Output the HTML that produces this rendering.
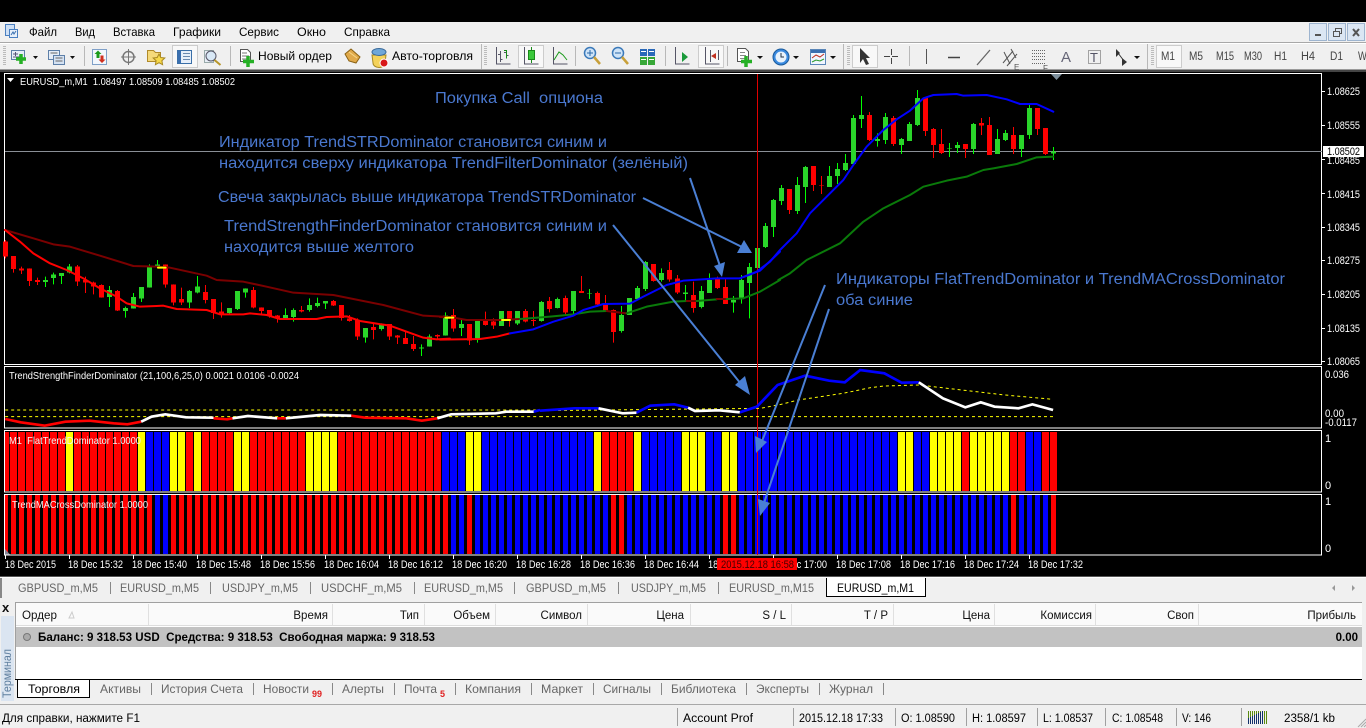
<!DOCTYPE html>
<html lang="ru"><head><meta charset="utf-8"><title>MetaTrader</title>
<style>
html,body{margin:0;padding:0;background:#000;overflow:hidden}
svg{display:block}
text{font-family:"Liberation Sans",sans-serif;white-space:pre}
.m{font-size:12px;fill:#000}
.a{font-size:11px;fill:#fff}
.t{font-size:10.5px;fill:#fff}
.n{font-size:15.5px;fill:#4a78cf}
.k{font-size:12px;fill:#666}
.h{font-size:11.5px;fill:#111}
.s{font-size:11.5px;fill:#000}
.e{text-anchor:end}
</style></head><body>
<svg xmlns="http://www.w3.org/2000/svg" width="1366" height="728" viewBox="0 0 1366 728">
<rect width="1366" height="728" fill="#000"/>

<!-- menu -->
<rect y="22" width="1366" height="20" fill="#f0f0f0"/>
<rect x="5.500" y="24.500" width="9" height="11" fill="#cfe0f5" stroke="#4a7fc0"/>
<rect x="9.500" y="29.500" width="8" height="8" fill="#e8f0fa" stroke="#4a7fc0"/>
<path d="M11 35l2-3 1 2 2-3" stroke="#3a70b0" fill="none"/>
<text class="m" x="29" y="36" textLength="28" lengthAdjust="spacingAndGlyphs">Файл</text>
<text class="m" x="75" y="36" textLength="20" lengthAdjust="spacingAndGlyphs">Вид</text>
<text class="m" x="113" y="36" textLength="42" lengthAdjust="spacingAndGlyphs">Вставка</text>
<text class="m" x="173" y="36" textLength="48" lengthAdjust="spacingAndGlyphs">Графики</text>
<text class="m" x="239" y="36" textLength="40" lengthAdjust="spacingAndGlyphs">Сервис</text>
<text class="m" x="297" y="36" textLength="29" lengthAdjust="spacingAndGlyphs">Окно</text>
<text class="m" x="344" y="36" textLength="46" lengthAdjust="spacingAndGlyphs">Справка</text>
<g fill="#dbe6f3" stroke="#9db4cf"><rect x="1309.500" y="23.500" width="17" height="17"/><rect x="1328.500" y="23.500" width="17" height="17"/><rect x="1347.500" y="23.500" width="17" height="17"/></g>
<rect x="1315" y="34" width="6" height="2" fill="#555"/>
<path d="M1333.500 31.500h6v5h-6zM1335.500 31v-2.500h6v5h-2" fill="none" stroke="#555"/>
<path d="M1353 29l6 7M1359 29l-6 7" stroke="#555" stroke-width="2"/>

<!-- toolbar -->
<rect y="42" width="1366" height="28" fill="#f0f0f0"/>
<rect y="42" width="1366" height="1" fill="#a8a8a8"/>
<rect y="43" width="1366" height="1" fill="#fff"/>
<rect y="69" width="1366" height="1" fill="#9a9a9a"/>
<rect y="70" width="1366" height="2" fill="#444"/>
<g fill="none" stroke="#bbb" stroke-dasharray="1 1"><path d="M4.500 46v20M485.500 46v20M848.500 46v20M1152.500 46v20" stroke-width="3"/></g>
<g fill="#b8b8b8"><rect x="84" y="46" width="1" height="20"/><rect x="230" y="46" width="1" height="20"/><rect x="481" y="44" width="1" height="25"/><rect x="575" y="46" width="1" height="20"/><rect x="665" y="46" width="1" height="20"/><rect x="727" y="46" width="1" height="20"/><rect x="843" y="44" width="1" height="25"/><rect x="909" y="46" width="1" height="20"/><rect x="1147" y="44" width="1" height="25"/></g>
<g fill="#f8f8f8" stroke="#ccc"><rect x="172.500" y="45.500" width="25" height="22"/><rect x="518.500" y="45.500" width="25" height="22"/><rect x="698.500" y="45.500" width="25" height="22"/><rect x="852.500" y="45.500" width="25" height="22"/><rect x="1156.500" y="45.500" width="25" height="22"/></g>
<!-- new chart -->
<rect x="11.500" y="50.500" width="13" height="9" fill="#e6eef8" stroke="#5d7fa8"/><path d="M13 54h5M15.500 52v4M13 57h8" stroke="#557"/>
<path d="M21 54v10M16 59h10" stroke="#25b025" stroke-width="3.500"/>
<path d="M33 56h5l-2.500 3z" fill="#111"/>
<rect x="48.500" y="50.500" width="11" height="9" fill="#e5edf7" stroke="#5d7fa8"/><rect x="53.500" y="55.500" width="11" height="9" fill="#d5e2f2" stroke="#5d7fa8"/><path d="M50.500 53h7M55.500 58h7M55.500 61h7" stroke="#666"/>
<path d="M70 56h5l-2.500 3z" fill="#111"/>
<!-- market watch -->
<rect x="92.500" y="49.500" width="14" height="15" fill="#f2f7fd" stroke="#7fa0c8"/><path d="M98 50.500l-3.500 3.500h2v4h3v-4h2z" fill="#1a9a1a"/><path d="M102 63l3.500-3.500h-2v-4h-3v4h-2z" fill="#d03020"/>
<!-- nav -->
<circle cx="128.500" cy="57" r="5.500" fill="none" stroke="#777" stroke-width="1.500"/><path d="M128.500 49v16M121 57h15" stroke="#777"/>
<!-- folder star -->
<path d="M147.500 50.500h6l2 2h5v9h-13z" fill="#f5d97a" stroke="#b08a2a"/><path d="M159 54l1.800 3.500 4 .5-2.900 2.700.7 4-3.600-2-3.600 2 .7-4-2.900-2.700 4-.5z" fill="#f6d84a" stroke="#a88820"/>
<!-- data window -->
<rect x="177.500" y="50.500" width="14" height="13" fill="#e6effa" stroke="#3a6fa8"/><rect x="178" y="51" width="3" height="12" fill="#3a6fb0"/><path d="M183 53.500h7M183 56.500h7M183 59.500h7" stroke="#6a8ab0"/>
<!-- tester -->
<rect x="204.500" y="50.500" width="9" height="12" fill="#e8eef6" stroke="#9aa"/><circle cx="211" cy="56" r="5" fill="#d8e8f6" stroke="#556"/><path d="M214.500 60l6 5" stroke="#b8962a" stroke-width="2"/>
<!-- order -->
<path d="M240.500 49.500h7l3 3v9h-10z" fill="#fff" stroke="#555"/><path d="M242 53h5M242 56h7M242 59h5" stroke="#777"/>
<path d="M248 56v11M243 61.500h11" stroke="#25b025" stroke-width="3.500"/>
<text class="m" x="258" y="60" textLength="74" lengthAdjust="spacingAndGlyphs">Новый ордер</text>
<path d="M345 54l6-5 9 8-4 6-7-2z" fill="#e0a94a" stroke="#8a6215"/><path d="M349 52l8 6" stroke="#f6d78a" fill="none"/>
<path d="M372 55h14l-1 8a6 4.500 0 0 1-12 0z" fill="#f4d25a" stroke="#a88820"/><ellipse cx="379" cy="52" rx="7" ry="3.500" fill="#6fa7d8" stroke="#3a6a9a"/><circle cx="384" cy="63" r="4" fill="#d81818" stroke="#fff"/>
<text class="m" x="392" y="60" textLength="81" lengthAdjust="spacingAndGlyphs">Авто-торговля</text>
<!-- chart types -->
<path d="M496.500 47v17h14M500.500 51v11M498 54.500h2M500.500 59.500h2M506.500 50v8M504 52.500h2M506.500 55.500h2" stroke="#556" fill="none"/><path d="M504 50.500h2.500v8" stroke="#1a8a1a" fill="none"/>
<path d="M524.500 47v17h14" stroke="#556" fill="none"/><path d="M531.500 47v16" stroke="#1a8a1a"/><rect x="528.500" y="50.500" width="6" height="9" fill="#3ac83a" stroke="#1a8a1a"/>
<path d="M553.500 47v17h14" stroke="#556" fill="none"/><path d="M554 60l5-8 4 3 4 5" stroke="#1a9a1a" fill="none"/>
<!-- zoom -->
<circle cx="590" cy="53" r="5.500" fill="#cfe4f8" stroke="#3a79b9" stroke-width="1.500"/><path d="M587 53h6M590 50v6" stroke="#2a69a9"/><path d="M594 57l6 7" stroke="#c8a03a" stroke-width="2.500"/>
<circle cx="618" cy="53" r="5.500" fill="#cfe4f8" stroke="#3a79b9" stroke-width="1.500"/><path d="M615 53h6" stroke="#2a69a9"/><path d="M622 57l6 7" stroke="#c8a03a" stroke-width="2.500"/>
<g><rect x="640" y="49" width="7" height="7" fill="#2a69b9"/><rect x="648" y="49" width="7" height="7" fill="#2a69b9"/><rect x="640" y="57" width="7" height="8" fill="#38a838"/><rect x="648" y="57" width="7" height="8" fill="#38a838"/><path d="M641 51.500h5M649 51.500h5M641 59.500h5M649 59.500h5" stroke="#fff"/></g>
<path d="M675.500 47v17h14" stroke="#556" fill="none"/><path d="M682 52l6 5-6 5z" fill="#1a9a3a"/>
<path d="M705.500 47v17h14" stroke="#556" fill="none"/><path d="M710.500 50v12M718.500 50v10" stroke="#556"/><path d="M711 56l5-3v6z" fill="#c03020"/>
<!-- template -->
<path d="M737.500 48.500h8l3 3v10h-11z" fill="#fff" stroke="#555"/><path d="M740 52.500h5M740 55.500h6M740 58.500h5" stroke="#888"/>
<path d="M746 56v11M741 61.500h11" stroke="#25b025" stroke-width="3.500"/>
<path d="M757 56h6l-3 3z" fill="#111"/>
<circle cx="781" cy="57" r="8" fill="#3a8ae0" stroke="#1a5a9a"/><circle cx="781" cy="57" r="5.500" fill="#e8f2fb"/><path d="M781 53v4h3" stroke="#234" fill="none"/>
<path d="M793 56h6l-3 3z" fill="#111"/>
<rect x="810.500" y="49.500" width="15" height="15" fill="#f0f6ff" stroke="#5a86b8"/><rect x="811" y="50" width="14" height="3" fill="#3a6fb0"/><path d="M812 58l4-3 4 2 4-3" stroke="#c03020" fill="none"/><path d="M812 62l4-2 4 1 4-2" stroke="#2a9a2a" fill="none"/>
<path d="M830 56h6l-3 3z" fill="#111"/>
<!-- cursor & tools -->
<path d="M860 48l0 15 3-4 3 6 3-1-3-6h4z" fill="#333"/>
<path d="M891.500 49v6M891.500 58v6M884 56.500h6M892 56.500h6" stroke="#444"/>
<path d="M926.500 49v15" stroke="#555"/>
<path d="M948 57.500h12" stroke="#444" stroke-width="1.500"/>
<path d="M977 65l13-15" stroke="#666" stroke-width="1.300"/>
<path d="M1003 63l10-12M1007 66l10-12M1010 64l-6-12M1016 58l-5-9" stroke="#555"/><text x="1014" y="70" font-size="8" fill="#555">E</text>
<path d="M1032 50.500h13M1032 53.500h13M1032 56.500h13M1032 59.500h13M1032 63.500h13" stroke="#666" stroke-dasharray="1 1"/><text x="1043" y="71" font-size="8" fill="#555">F</text>
<text x="1061" y="62" font-size="15" fill="#667">A</text>
<rect x="1088.500" y="50.500" width="12" height="13" fill="none" stroke="#555" stroke-dasharray="1 1"/><text x="1090" y="62" font-size="13" fill="#556">T</text>
<path d="M1116 49l4 4-4 4zM1122 58l5 4-5 4z" fill="#333"/><path d="M1118 53l6 8" stroke="#333"/>
<path d="M1134 56h6l-3 3z" fill="#111"/>
<g class="tf" font-size="11.500" fill="#444">
<text x="1161" y="60" textLength="14" lengthAdjust="spacingAndGlyphs">M1</text>
<text x="1189" y="60" textLength="14" lengthAdjust="spacingAndGlyphs">M5</text>
<text x="1216" y="60" textLength="18" lengthAdjust="spacingAndGlyphs">M15</text>
<text x="1244" y="60" textLength="18" lengthAdjust="spacingAndGlyphs">M30</text>
<text x="1274" y="60" textLength="13" lengthAdjust="spacingAndGlyphs">H1</text>
<text x="1301" y="60" textLength="14" lengthAdjust="spacingAndGlyphs">H4</text>
<text x="1330" y="60" textLength="13" lengthAdjust="spacingAndGlyphs">D1</text>
<text x="1358" y="60" textLength="14" lengthAdjust="spacingAndGlyphs">W1</text>
</g>

<!-- chart frames -->
<rect x="4.500" y="73.500" width="1317" height="291" fill="#000" stroke="#fff"/>
<rect x="4.500" y="366.500" width="1317" height="61.500" fill="#000" stroke="#fff"/>
<rect x="4.500" y="430.500" width="1317" height="61.500" fill="#000" stroke="#fff"/>
<rect x="4.500" y="494.500" width="1317" height="60.500" fill="#000" stroke="#fff"/>

<!-- price line -->
<rect x="5" y="151" width="1317" height="1" fill="#8a8f96"/>

<!-- candles -->
<g shape-rendering="crispEdges" fill="none">
<g transform="translate(0 225) scale(1 .33333)">
<path stroke="#f00" stroke-width="1" d="M5.500 45V100M13.500 93V143M21.500 125V147M29.500 130V183M37.500 158V180M77.500 120V183M85.500 155V204M93.500 170V208M101.500 178V218M117.500 195V258M165.500 118V188M173.500 178V241M181.500 188V240M205.500 180V235M213.500 222V282M221.500 232V278M253.500 186V250M261.500 247V270M269.500 255V278M277.500 270V293M301.500 243V262M333.500 225V243M341.500 240V287M349.500 270V290M357.500 280V345M373.500 295V343M389.500 297V345M397.500 330V357M405.500 320V357M413.500 333V378M437.500 328V342M453.500 252V320M469.500 297V360M485.500 260V302M493.500 280V312M509.500 258V305M525.500 252V292M533.500 258V303M549.500 216V262M565.500 212V272M581.500 153V204M597.500 200V245M605.500 210V260M613.500 253V353M653.500 117V170M669.500 111V170M677.500 150V207M693.500 170V263M717.500 155V192M725.500 163V237"/>
<path stroke="#0f0" stroke-width="1" d="M45.500 155V186M53.500 143V178M61.500 144V177M69.500 117V145M109.500 183V246M125.500 245V278M133.500 204V251M141.500 186V231M149.500 118V188M157.500 105V130M189.500 195V249M197.500 153V205M229.500 249V270M237.500 198V255M245.500 190V218M285.500 250V280M293.500 250V290M309.500 220V260M317.500 218V247M325.500 228V252M365.500 309V353M381.500 295V317M421.500 358V393M429.500 328V365M445.500 262V332M461.500 285V333M477.500 288V353M501.500 258V303M517.500 258V300M541.500 228V290M557.500 218V250M573.500 198V270M589.500 192V222M621.500 243V323M629.500 219V270M637.500 183V225M645.500 108V198M661.500 130V170M685.500 180V228M701.500 183V250M709.500 145V204M733.500 213V263M741.500 150V236M749.500 114V280M757.500 69V129"/>
<path stroke="#f00" stroke-width="5" d="M5.500 50V95M13.500 93V132M21.500 130V136M29.500 130V168M37.500 165V171M77.500 125V170M85.500 165V173M93.500 172V185M101.500 180V217M117.500 198V257M165.500 118V179M173.500 178V232M181.500 222V232M205.500 201V225M213.500 222V264M221.500 259V266M253.500 195V248M261.500 247V258M269.500 255V273M277.500 272V279M301.500 255V260M333.500 228V242M341.500 240V279M349.500 281V288M357.500 287V335M373.500 306V315M389.500 297V335M397.500 332V337M405.500 339V357M413.500 357V372M437.500 330V335M453.500 270V310M469.500 297V347M485.500 288V300M493.500 290V302M509.500 258V285M525.500 258V290M533.500 285V288M549.500 228V252M565.500 219V262M581.500 198V204M597.500 204V238M605.500 238V258M613.500 255V321M653.500 117V168M669.500 135V163M677.500 160V202M693.500 210V249M717.500 162V189M725.500 186V237"/>
<path stroke="#2ad52a" stroke-width="5" d="M45.500 165V171M53.500 149V159M61.500 144V153M69.500 125V143M109.500 195V216M125.500 249V258M133.500 216V251M141.500 186V221M149.500 126V188M157.500 118V128M189.500 198V233M197.500 185V203M229.500 249V264M237.500 198V252M245.500 190V203M285.500 270V279M293.500 255V276M309.500 240V255M317.500 234V243M325.500 228V236M365.500 309V337M381.500 300V312M421.500 368V370M429.500 335V365M445.500 272V332M461.500 297V309M477.500 288V345M501.500 258V303M517.500 258V295M541.500 231V288M557.500 222V249M573.500 198V258M589.500 204V206M621.500 270V318M629.500 219V270M637.500 189V222M645.500 111V192M661.500 144V165M685.500 202V207M701.500 198V246M709.500 165V204M733.500 225V233M741.500 165V219M749.500 126V174M757.500 69V129"/>
</g>
<g transform="translate(0 80) scale(1 .33333)">
<path stroke="#f00" stroke-width="1" d="M789.500 327V402M813.500 258V333M821.500 288V342M869.500 96V183M893.500 108V198M925.500 54V168M933.500 144V234M941.500 147V222M965.500 192V234M981.500 114V165M989.500 111V225M1013.500 141V222M1037.500 84V165M1045.500 144V225"/>
<path stroke="#0f0" stroke-width="1" d="M765.500 429V504M773.500 357V471M781.500 315V375M797.500 291V402M805.500 258V369M829.500 258V321M837.500 249V312M845.500 222V273M853.500 105V258M861.500 48V144M877.500 160V200M885.500 99V192M901.500 174V222M909.500 126V183M917.500 30V138M949.500 189V231M957.500 186V219M973.500 129V222M997.500 147V222M1005.500 150V183M1021.500 165V231M1029.500 75V177M1053.500 201V240"/>
<path stroke="#f00" stroke-width="5" d="M789.500 327V390M813.500 258V315M821.500 315V317M869.500 105V180M893.500 114V192M925.500 54V153M933.500 147V195M941.500 192V219M965.500 192V207M981.500 129V137M989.500 135V225M1013.500 165V207M1037.500 84V147M1045.500 144V222"/>
<path stroke="#2ad52a" stroke-width="5" d="M765.500 438V501M773.500 360V441M781.500 324V363M797.500 315V393M805.500 261V321M829.500 288V321M837.500 267V288M845.500 249V270M853.500 114V252M861.500 105V117M877.500 177V183M885.500 111V180M901.500 177V195M909.500 132V183M917.500 54V135M949.500 204V206M957.500 195V204M973.500 132V207M997.500 177V222M1005.500 159V180M1021.500 165V207M1029.500 84V165M1053.500 214V220"/>
</g>
</g>

<!-- period line -->
<rect x="757" y="74" width="1" height="481" fill="#e00000"/>

<!-- moving averages -->
<g fill="none" stroke-width="6" stroke-linejoin="round" stroke-linecap="round">
<g transform="translate(0 225) scale(.33333)">
<path stroke="#7a0000" d="M15 15L100 40L160 58L210 65L300 92L400 123L470 125L510 128L620 152L650 165L730 170L800 185L880 203L1000 210L1060 222L1150 240L1270 272L1350 276"/>
<path stroke="#f00" d="M15 15L60 50L100 85L150 115L200 135L250 160L300 190L350 215L380 235L420 245L470 243L490 242L530 252L620 255L660 268L730 268L750 265L800 270L840 282L950 282L980 276L1040 274L1080 288L1130 296L1170 302L1220 320L1270 338L1310 343L1350 341"/>
<path stroke="#ff0" d="M474 128H497M1340 278H1350"/>
</g>
<g transform="translate(440 225) scale(.33333)">
<path stroke="#7a0000" d="M0 276L40 278L80 285L180 285L240 282"/>
<path stroke="#0a7a0a" d="M240 282L330 275L400 268L450 260L500 258"/>
<path stroke="#7a0000" d="M500 258L560 265"/>
<path stroke="#0a7a0a" d="M560 265L620 245L700 230L740 228"/>
<path stroke="#7a0000" d="M740 228L770 228"/>
<path stroke="#0a7a0a" d="M770 228L830 223"/>
<path stroke="#7a0000" d="M830 222L860 222"/>
<path stroke="#0a7a0a" d="M860 222L910 220L960 200L1020 165"/>
<path stroke="#f00" d="M0 344L120 342L170 335L210 325"/>
<path stroke="#00f" d="M210 325L280 313L340 290L400 272L430 255L490 237L570 236L610 215L680 180L730 167L830 160L900 160L960 137L1020 80"/>
<path stroke="#ff0" d="M16 278H40M186 285H210"/>
</g>
<g transform="translate(740 80) scale(.33333)">
<path stroke="#0a7a0a" d="M115 600L150 580L200 540L300 490L370 425L430 385L510 345L550 320L620 302L680 290L730 270L760 265L830 252L890 232L940 230"/>
<path stroke="#00f" d="M0 595L50 575L90 545L120 510L170 460L210 400L260 350L310 300L340 255L380 200L430 150L470 118L510 92L550 55L580 45L650 42L670 47L740 45L800 58L840 72L890 72L940 95"/>
</g>
</g>

<!-- marker triangle -->
<path d="M1051 74h11l-5.500 6z" fill="#7d8f9c"/>

<!-- title -->
<path d="M7 78h7l-3.500 4z" fill="#fff"/>
<text class="t" x="20" y="85" textLength="215" lengthAdjust="spacingAndGlyphs">EURUSD_m,M1  1.08497 1.08509 1.08485 1.08502</text>

<!-- price axis -->
<g fill="#fff"><rect x="1322" y="91" width="3" height="1"/><rect x="1322" y="125" width="3" height="1"/><rect x="1322" y="159" width="3" height="1"/><rect x="1322" y="193" width="3" height="1"/><rect x="1322" y="227" width="3" height="1"/><rect x="1322" y="260" width="3" height="1"/><rect x="1322" y="294" width="3" height="1"/><rect x="1322" y="328" width="3" height="1"/><rect x="1322" y="361" width="3" height="1"/></g>
<g class="ax">
<text class="a" x="1327" y="95" textLength="33" lengthAdjust="spacingAndGlyphs">1.08625</text>
<text class="a" x="1327" y="129" textLength="33" lengthAdjust="spacingAndGlyphs">1.08555</text>
<text class="a" x="1327" y="164" textLength="33" lengthAdjust="spacingAndGlyphs">1.08485</text>
<text class="a" x="1327" y="198" textLength="33" lengthAdjust="spacingAndGlyphs">1.08415</text>
<text class="a" x="1327" y="231" textLength="33" lengthAdjust="spacingAndGlyphs">1.08345</text>
<text class="a" x="1327" y="264" textLength="33" lengthAdjust="spacingAndGlyphs">1.08275</text>
<text class="a" x="1327" y="298" textLength="33" lengthAdjust="spacingAndGlyphs">1.08205</text>
<text class="a" x="1327" y="332" textLength="33" lengthAdjust="spacingAndGlyphs">1.08135</text>
<text class="a" x="1327" y="365" textLength="33" lengthAdjust="spacingAndGlyphs">1.08065</text>
</g>
<rect x="1323" y="146" width="41" height="11" fill="#fff"/>
<text class="a" x="1327" y="155" textLength="33" lengthAdjust="spacingAndGlyphs" style="fill:#000">1.08502</text>

<!-- Sub 1 -->
<g fill="none">
<g transform="translate(0 365) scale(.34435 .33333)" stroke-width="8">
<path stroke="#ff0" stroke-width="1" vector-effect="non-scaling-stroke" stroke-dasharray="3 3" d="M15 135H1568M15 155H1568"/>
<path stroke="#f00" d="M15 162L60 172L130 182L190 170L260 167L330 175L370 178L410 170M620 160L660 163L675 160M805 160L830 160M1020 152L1060 158L1180 160L1225 167L1270 160"/>
<path stroke="#fff" d="M410 170L440 155L480 148L540 157L620 158M675 160L720 153L805 160M830 160L930 150L1020 152M1270 160L1310 148L1440 145L1470 140L1550 140"/>
<path stroke="#00f" d="M1550 140L1568 135"/>
</g>
<g transform="translate(540 365) scale(.34435 .33333)" stroke-width="8">
<path stroke="#ff0" stroke-width="1" vector-effect="non-scaling-stroke" stroke-dasharray="3 3" d="M0 155H1490M0 137L640 130L700 118L750 105L880 85L960 68L1000 63L1100 60L1200 72L1350 90L1490 103"/>
<path stroke="#00f" d="M0 137L100 130L170 130M280 143L320 122L390 118L430 128M580 142L630 125L690 60L770 32L840 47L885 52L930 15L1000 25L1050 53L1100 52"/>
<path stroke="#fff" d="M170 130L240 145L280 143M430 128L450 138L520 136L580 142M1100 52L1170 100L1235 127L1280 112L1320 125L1390 130L1430 118L1490 135"/>
</g>
</g>
<text class="t" x="9" y="379" textLength="290" lengthAdjust="spacingAndGlyphs">TrendStrengthFinderDominator (21,100,6,25,0) 0.0021 0.0106 -0.0024</text>
<text class="a" x="1325" y="378" font-size="10" textLength="24" lengthAdjust="spacingAndGlyphs">0.036</text>
<text class="a" x="1325" y="417" textLength="19" lengthAdjust="spacingAndGlyphs">0.00</text>
<text class="a" x="1325" y="426" textLength="32" lengthAdjust="spacingAndGlyphs">-0.0117</text>

<!-- Sub 2 -->
<g shape-rendering="crispEdges">
<path fill="#f00" d="M5 432H66V491H5zM74 432H138V491H74zM186 432H194V491H186zM202 432H234V491H202zM250 432H306V491H250zM338 432H442V491H338zM602 432H634V491H602zM962 432H970V491H962zM1010 432H1026V491H1010zM1042 432H1057V491H1042z"/>
<path fill="#ff0" d="M66 432H74V491H66zM138 432H146V491H138zM170 432H186V491H170zM194 432H202V491H194zM234 432H250V491H234zM306 432H338V491H306zM466 432H482V491H466zM594 432H602V491H594zM634 432H642V491H634zM682 432H706V491H682zM722 432H738V491H722zM898 432H914V491H898zM930 432H962V491H930zM970 432H1010V491H970z"/>
<path fill="#00f" d="M146 432H170V491H146zM442 432H466V491H442zM482 432H594V491H482zM642 432H682V491H642zM706 432H722V491H706zM738 432H898V491H738zM914 432H930V491H914zM1026 432H1042V491H1026z"/>
<path d="M9 461.500H1058" stroke="#000" stroke-width="59" stroke-dasharray="1 7" fill="none"/>
<rect x="757" y="431" width="1" height="61" fill="#e00000"/>
</g>
<text class="t" x="9" y="444" textLength="132" lengthAdjust="spacingAndGlyphs" style="fill:#f4f4f4">M1  FlatTrendDominator 1.0000</text>
<text class="a" x="1325" y="442">1</text><text class="a" x="1325" y="489">0</text>

<!-- Sub 3 -->
<g shape-rendering="crispEdges">
<path fill="#f00" d="M5 495H154V554H5zM170 495H450V554H170zM466 495H474V554H466zM610 495H626V554H610zM722 495H738V554H722zM1010 495H1018V554H1010zM1050 495H1056V554H1050z"/>
<path fill="#00f" d="M154 495H170V554H154zM450 495H466V554H450zM474 495H610V554H474zM626 495H722V554H626zM738 495H1010V554H738zM1018 495H1050V554H1018z"/>
<path d="M8 524.500H1058" stroke="#000" stroke-width="59" stroke-dasharray="3 5" fill="none"/>
<rect x="757" y="495" width="1" height="60" fill="#e00000"/>
</g>
<path d="M5 549l5 5.500H5z" fill="#889"/>
<text class="t" x="12" y="508" textLength="136" lengthAdjust="spacingAndGlyphs" style="fill:#f4f4f4">TrendMACrossDominator 1.0000</text>
<text class="a" x="1325" y="505">1</text><text class="a" x="1325" y="552">0</text>

<!-- Annotations -->
<g class="arrows" fill="none" stroke="#4a7fd4" stroke-width="2">
<path d="M690 178L720 266"/><path d="M643 198L742 247"/><path d="M613 225L741 384"/><path d="M825 285L762 441"/><path d="M829 309L764 503"/>
</g>
<g fill="#4a7fd4">
<path d="M722 277L714 266L725 262z"/><path d="M752 253L737 253L744 240z"/><path d="M750 395L735 385L745 376z"/><path d="M756 453L755 436L767 442z"/><path d="M760 516L758 499L770 503z"/>
</g>
<text class="n" x="435" y="103" textLength="168" lengthAdjust="spacingAndGlyphs">Покупка Call  опциона</text>
<text class="n" x="219" y="147" textLength="388" lengthAdjust="spacingAndGlyphs">Индикатор TrendSTRDominator становится синим и</text>
<text class="n" x="219" y="168" textLength="469" lengthAdjust="spacingAndGlyphs">находится сверху индикатора TrendFilterDominator (зелёный)</text>
<text class="n" x="218" y="202" textLength="418" lengthAdjust="spacingAndGlyphs">Свеча закрылась выше индикатора TrendSTRDominator</text>
<text class="n" x="224" y="231" textLength="383" lengthAdjust="spacingAndGlyphs">TrendStrengthFinderDominator становится синим и</text>
<text class="n" x="224" y="252" textLength="190" lengthAdjust="spacingAndGlyphs">находится выше желтого</text>
<text class="n" x="836" y="284" textLength="449" lengthAdjust="spacingAndGlyphs">Индикаторы FlatTrendDominator и TrendMACrossDominator</text>
<text class="n" x="836" y="305" textLength="77" lengthAdjust="spacingAndGlyphs">оба синие</text>

<!-- Time axis -->
<g fill="#fff"><rect x="5" y="555" width="1" height="4"/><rect x="69" y="555" width="1" height="4"/><rect x="133" y="555" width="1" height="4"/><rect x="197" y="555" width="1" height="4"/><rect x="261" y="555" width="1" height="4"/><rect x="325" y="555" width="1" height="4"/><rect x="389" y="555" width="1" height="4"/><rect x="453" y="555" width="1" height="4"/><rect x="517" y="555" width="1" height="4"/><rect x="581" y="555" width="1" height="4"/><rect x="645" y="555" width="1" height="4"/><rect x="709" y="555" width="1" height="4"/><rect x="773" y="555" width="1" height="4"/><rect x="837" y="555" width="1" height="4"/><rect x="901" y="555" width="1" height="4"/><rect x="965" y="555" width="1" height="4"/><rect x="1029" y="555" width="1" height="4"/></g>
<g>
<text class="a" x="5" y="568" textLength="51" lengthAdjust="spacingAndGlyphs">18 Dec 2015</text>
<text class="a" x="68" y="568" textLength="55" lengthAdjust="spacingAndGlyphs">18 Dec 15:32</text>
<text class="a" x="132" y="568" textLength="55" lengthAdjust="spacingAndGlyphs">18 Dec 15:40</text>
<text class="a" x="196" y="568" textLength="55" lengthAdjust="spacingAndGlyphs">18 Dec 15:48</text>
<text class="a" x="260" y="568" textLength="55" lengthAdjust="spacingAndGlyphs">18 Dec 15:56</text>
<text class="a" x="324" y="568" textLength="55" lengthAdjust="spacingAndGlyphs">18 Dec 16:04</text>
<text class="a" x="388" y="568" textLength="55" lengthAdjust="spacingAndGlyphs">18 Dec 16:12</text>
<text class="a" x="452" y="568" textLength="55" lengthAdjust="spacingAndGlyphs">18 Dec 16:20</text>
<text class="a" x="516" y="568" textLength="55" lengthAdjust="spacingAndGlyphs">18 Dec 16:28</text>
<text class="a" x="580" y="568" textLength="55" lengthAdjust="spacingAndGlyphs">18 Dec 16:36</text>
<text class="a" x="644" y="568" textLength="55" lengthAdjust="spacingAndGlyphs">18 Dec 16:44</text>
<text class="a" x="708" y="568" textLength="55" lengthAdjust="spacingAndGlyphs">18 Dec 16:52</text>
<text class="a" x="772" y="568" textLength="55" lengthAdjust="spacingAndGlyphs">18 Dec 17:00</text>
<text class="a" x="836" y="568" textLength="55" lengthAdjust="spacingAndGlyphs">18 Dec 17:08</text>
<text class="a" x="900" y="568" textLength="55" lengthAdjust="spacingAndGlyphs">18 Dec 17:16</text>
<text class="a" x="964" y="568" textLength="55" lengthAdjust="spacingAndGlyphs">18 Dec 17:24</text>
<text class="a" x="1028" y="568" textLength="55" lengthAdjust="spacingAndGlyphs">18 Dec 17:32</text>
</g>
<rect x="717" y="558" width="80" height="12" fill="#f00"/>
<text class="a" x="721" y="568" textLength="73" lengthAdjust="spacingAndGlyphs" style="fill:#400">2015.12.18 16:58</text>

<!-- chart tabs -->
<rect y="576" width="1366" height="1" fill="#555"/>
<rect y="577" width="1366" height="1" fill="#fff"/>
<rect y="578" width="1366" height="20" fill="#f0f0f0"/>
<rect x="0" y="578" width="2" height="20" fill="#888"/>
<g fill="#888"><rect x="110" y="582" width="1" height="12"/><rect x="210" y="582" width="1" height="12"/><rect x="310" y="582" width="1" height="12"/><rect x="414" y="582" width="1" height="12"/><rect x="514" y="582" width="1" height="12"/><rect x="618" y="582" width="1" height="12"/><rect x="718" y="582" width="1" height="12"/></g>
<g>
<text class="k" x="18" y="592" textLength="80" lengthAdjust="spacingAndGlyphs">GBPUSD_m,M5</text>
<text class="k" x="120" y="592" textLength="79" lengthAdjust="spacingAndGlyphs">EURUSD_m,M5</text>
<text class="k" x="222" y="592" textLength="76" lengthAdjust="spacingAndGlyphs">USDJPY_m,M5</text>
<text class="k" x="321" y="592" textLength="81" lengthAdjust="spacingAndGlyphs">USDCHF_m,M5</text>
<text class="k" x="424" y="592" textLength="79" lengthAdjust="spacingAndGlyphs">EURUSD_m,M5</text>
<text class="k" x="526" y="592" textLength="80" lengthAdjust="spacingAndGlyphs">GBPUSD_m,M5</text>
<text class="k" x="631" y="592" textLength="75" lengthAdjust="spacingAndGlyphs">USDJPY_m,M5</text>
<text class="k" x="729" y="592" textLength="85" lengthAdjust="spacingAndGlyphs">EURUSD_m,M15</text>
</g>
<path d="M826.500 578V596.500H925.500V578" fill="#fff" stroke="#000"/>
<text class="m" x="837" y="592" textLength="77" lengthAdjust="spacingAndGlyphs">EURUSD_m,M1</text>
<path d="M1335 585l-3 3 3 3zM1352 585l3 3-3 3z" fill="#999"/>

<!-- terminal -->
<rect y="598" width="1366" height="106" fill="#f0f0f0"/>
<text x="2" y="612" font-size="13" font-weight="bold" fill="#111">x</text>
<rect x="1" y="616" width="13" height="85" fill="#dbe5f1"/>
<text transform="translate(11 698) rotate(-90)" font-size="12" fill="#5f7f9f" textLength="49" lengthAdjust="spacingAndGlyphs">Терминал</text>
<rect x="15" y="602" width="1347" height="78" fill="#fff"/>
<rect x="15" y="602" width="1347" height="1" fill="#a0a0a0"/>
<rect x="15" y="602" width="1" height="78" fill="#a0a0a0"/>
<rect x="16" y="603" width="1346" height="22" fill="#fafafa"/>
<rect x="16" y="625" width="1346" height="1" fill="#ddd"/>
<g fill="#e0e0e0"><rect x="148" y="604" width="1" height="21"/><rect x="332" y="604" width="1" height="21"/><rect x="424" y="604" width="1" height="21"/><rect x="495" y="604" width="1" height="21"/><rect x="587" y="604" width="1" height="21"/><rect x="690" y="604" width="1" height="21"/><rect x="791" y="604" width="1" height="21"/><rect x="893" y="604" width="1" height="21"/><rect x="994" y="604" width="1" height="21"/><rect x="1095" y="604" width="1" height="21"/><rect x="1198" y="604" width="1" height="21"/></g>
<g>
<text class="h" x="22" y="619" textLength="35" lengthAdjust="spacingAndGlyphs">Ордер</text>
<path d="M69 618l3-6 2 6z" fill="none" stroke="#ccc"/>
<text class="h e" x="328" y="619">Время</text>
<text class="h e" x="419" y="619">Тип</text>
<text class="h e" x="490" y="619">Объем</text>
<text class="h e" x="582" y="619">Символ</text>
<text class="h e" x="684" y="619">Цена</text>
<text class="h e" x="786" y="619">S / L</text>
<text class="h e" x="888" y="619">T / P</text>
<text class="h e" x="990" y="619">Цена</text>
<text class="h e" x="1092" y="619">Комиссия</text>
<text class="h e" x="1194" y="619">Своп</text>
<text class="h e" x="1356" y="619">Прибыль</text>
</g>
<rect x="16" y="627" width="1346" height="20" fill="#c2c2c2"/>
<circle cx="27" cy="637" r="3.500" fill="#aaa" stroke="#777"/>
<text x="38" y="641" font-size="11.500" font-weight="bold" fill="#000" textLength="397" lengthAdjust="spacingAndGlyphs">Баланс: 9 318.53 USD  Средства: 9 318.53  Свободная маржа: 9 318.53</text>
<text x="1358" y="641" font-size="11.500" font-weight="bold" fill="#000" text-anchor="end">0.00</text>
<rect x="15" y="679" width="1347" height="1" fill="#000"/>
<path d="M17.500 680V697.500H89.500V680" fill="#fff" stroke="#000"/>
<rect x="16" y="679" width="2" height="1" fill="#000"/>
<text class="m" x="28" y="693" textLength="52" lengthAdjust="spacingAndGlyphs">Торговля</text>
<g fill="#888"><rect x="151" y="683" width="1" height="12"/><rect x="253" y="683" width="1" height="12"/><rect x="332" y="683" width="1" height="12"/><rect x="394" y="683" width="1" height="12"/><rect x="455" y="683" width="1" height="12"/><rect x="531" y="683" width="1" height="12"/><rect x="593" y="683" width="1" height="12"/><rect x="661" y="683" width="1" height="12"/><rect x="746" y="683" width="1" height="12"/><rect x="819" y="683" width="1" height="12"/><rect x="883" y="683" width="1" height="12"/></g>
<g>
<text class="k" x="100" y="693" textLength="41" lengthAdjust="spacingAndGlyphs">Активы</text>
<text class="k" x="161" y="693" textLength="82" lengthAdjust="spacingAndGlyphs">История Счета</text>
<text class="k" x="263" y="693" textLength="46" lengthAdjust="spacingAndGlyphs">Новости</text>
<text x="312" y="697" font-size="9" font-weight="bold" fill="#e02020" textLength="10" lengthAdjust="spacingAndGlyphs">99</text>
<text class="k" x="342" y="693" textLength="42" lengthAdjust="spacingAndGlyphs">Алерты</text>
<text class="k" x="404" y="693" textLength="33" lengthAdjust="spacingAndGlyphs">Почта</text>
<text x="440" y="697" font-size="9" font-weight="bold" fill="#e02020">5</text>
<text class="k" x="465" y="693" textLength="56" lengthAdjust="spacingAndGlyphs">Компания</text>
<text class="k" x="541" y="693" textLength="42" lengthAdjust="spacingAndGlyphs">Маркет</text>
<text class="k" x="603" y="693" textLength="48" lengthAdjust="spacingAndGlyphs">Сигналы</text>
<text class="k" x="671" y="693" textLength="65" lengthAdjust="spacingAndGlyphs">Библиотека</text>
<text class="k" x="756" y="693" textLength="53" lengthAdjust="spacingAndGlyphs">Эксперты</text>
<text class="k" x="829" y="693" textLength="44" lengthAdjust="spacingAndGlyphs">Журнал</text>
</g>

<!-- status -->
<rect y="704" width="1366" height="1" fill="#a8a8a8"/>
<rect y="705" width="1366" height="23" fill="#f0f0f0"/>
<g fill="#a0a0a0"><rect x="677" y="708" width="1" height="18"/><rect x="793" y="708" width="1" height="18"/><rect x="895" y="708" width="1" height="18"/><rect x="966" y="708" width="1" height="18"/><rect x="1037" y="708" width="1" height="18"/><rect x="1105" y="708" width="1" height="18"/><rect x="1176" y="708" width="1" height="18"/><rect x="1241" y="708" width="1" height="18"/></g>
<text class="s" x="2" y="722" textLength="138" lengthAdjust="spacingAndGlyphs">Для справки, нажмите F1</text>
<text class="s" x="683" y="722" textLength="70" lengthAdjust="spacingAndGlyphs">Account Prof</text>
<text class="s" x="799" y="722" textLength="84" lengthAdjust="spacingAndGlyphs">2015.12.18 17:33</text>
<text class="s" x="901" y="722" textLength="54" lengthAdjust="spacingAndGlyphs">O: 1.08590</text>
<text class="s" x="972" y="722" textLength="54" lengthAdjust="spacingAndGlyphs">H: 1.08597</text>
<text class="s" x="1043" y="722" textLength="50" lengthAdjust="spacingAndGlyphs">L: 1.08537</text>
<text class="s" x="1112" y="722" textLength="51" lengthAdjust="spacingAndGlyphs">C: 1.08548</text>
<text class="s" x="1182" y="722" textLength="29" lengthAdjust="spacingAndGlyphs">V: 146</text>
<path d="M1248.500 711v13M1250.500 711v13M1252.500 711v13M1254.500 711v13M1256.500 711v13M1258.500 711v13M1260.500 711v13M1262.500 711v13M1264.500 711v13M1266.500 711v13" stroke="#5a8a10" stroke-width="1"/>
<path d="M1248.500 718v6M1250.500 717v7M1252.500 716v8M1254.500 715v9M1256.500 714v10M1258.500 713v11M1260.500 712v12M1262.500 711v13" stroke="#12306a" stroke-width="1"/>
<text class="s" x="1284" y="722" textLength="51" lengthAdjust="spacingAndGlyphs">2358/1 kb</text>
<path d="M1358 727l8-8M1361 727l5-5M1364 727l2-2" stroke="#aaa"/>
</svg>
</body></html>
